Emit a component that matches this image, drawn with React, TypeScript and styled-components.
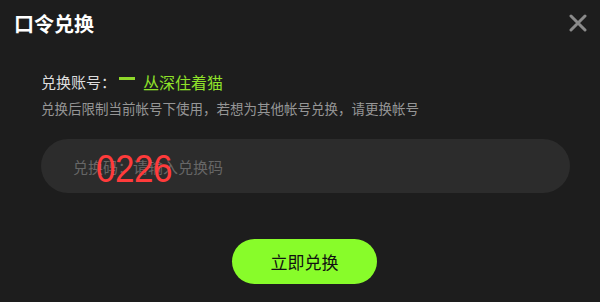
import React from 'react';
import styled, { createGlobalStyle } from 'styled-components';

const GlobalStyle = createGlobalStyle`
  html, body {
    margin: 0;
    padding: 0;
    background: #1d1d1d;
  }
  body {
    font-family: "Noto Sans CJK SC", "Liberation Sans", sans-serif;
  }
`;

const Dialog = styled.div`
  width: 600px;
  height: 302px;
  box-sizing: border-box;
  background: #1d1d1d;
  display: flex;
  flex-direction: column;
  overflow: hidden;
`;

const Header = styled.div`
  display: flex;
  align-items: center;
  justify-content: space-between;
  height: 46px;
  padding: 0 10px 0 14px;
`;

const Title = styled.h1`
  margin: 0;
  font-size: 20px;
  font-weight: 700;
  color: #ffffff;
`;

const CloseButton = styled.button`
  width: 24px;
  height: 24px;
  padding: 0;
  border: none;
  background: none;
  cursor: pointer;
  display: flex;
  align-items: center;
  justify-content: center;
`;

const Body = styled.div`
  display: flex;
  flex-direction: column;
  padding: 23px 30px 0 41px;
`;

const AccountLine = styled.div`
  display: flex;
  align-items: center;
  font-size: 15px;
  color: #dddddd;
  line-height: 26px;
`;

const Nick = styled.span`
  color: #8fe12a;
  font-size: 16px;
  display: flex;
  align-items: center;
`;

const Mask = styled.span`
  display: inline-block;
  width: 16px;
  height: 3px;
  margin: -8px 8px 0 3px;
  background: #8fd82a;
`;

const Hint = styled.p`
  margin: 3px 0 0;
  font-size: 13.5px;
  color: #969696;
  line-height: 20px;
`;

const InputWrap = styled.div`
  position: relative;
  margin-top: 21px;
  width: 529px;
  height: 54px;
  border-radius: 27px;
  background: #2c2c2c;
  display: flex;
  align-items: center;
`;

const CodeInput = styled.input`
  flex: 1;
  height: 100%;
  border: none;
  outline: none;
  background: transparent;
  padding: 0 32px;
  font-family: inherit;
  font-size: 15px;
  color: #dddddd;

  &::placeholder {
    color: #666666;
  }
`;

const Stamp = styled.span`
  position: absolute;
  left: 55px;
  top: 9px;
  font-family: "Liberation Sans", sans-serif;
  font-size: 35px;
  line-height: 1;
  color: #ff3b3b;
  letter-spacing: -0.5px;
  transform: scaleY(1.12);
  transform-origin: top left;
  pointer-events: none;
`;

const Footer = styled.div`
  display: flex;
  justify-content: center;
  padding-top: 46px;
  padding-left: 9px;
`;

const SubmitButton = styled.button`
  width: 145px;
  height: 45px;
  border: none;
  border-radius: 23px;
  background: #88fc2a;
  color: #111111;
  font-family: inherit;
  font-size: 17px;
  cursor: pointer;
`;

const App: React.FC = () => {
  return (
    <>
      <GlobalStyle />
      <Dialog>
        <Header>
          <Title>口令兑换</Title>
          <CloseButton aria-label="关闭">
            <svg width="18" height="18" viewBox="0 0 18 18">
              <path d="M2 2L16 16M16 2L2 16" stroke="#8a8a8a" strokeWidth="3" strokeLinecap="round" />
            </svg>
          </CloseButton>
        </Header>
        <Body>
          <AccountLine>
            兑换账号：
            <Nick>
              <Mask />
              丛深住着猫
            </Nick>
          </AccountLine>
          <Hint>兑换后限制当前帐号下使用，若想为其他帐号兑换，请更换帐号</Hint>
          <InputWrap>
            <CodeInput placeholder="兑换码：请输入兑换码" />
            <Stamp>0226</Stamp>
          </InputWrap>
        </Body>
        <Footer>
          <SubmitButton>立即兑换</SubmitButton>
        </Footer>
      </Dialog>
    </>
  );
};

export default App;
